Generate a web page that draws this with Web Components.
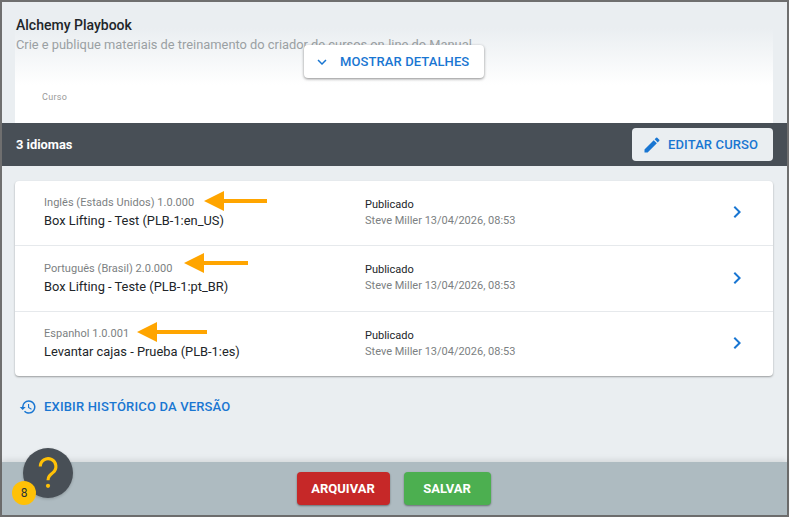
<!DOCTYPE html>
<html lang="pt">
<head>
<meta charset="utf-8">
<style>
  html, body { margin: 0; height: 100%; }
  body { font-family: Roboto, "Liberation Sans", sans-serif; overflow: hidden; }
</style>
</head>
<body>
<course-dialog>
  <course-header title-text="Alchemy Playbook"
    description="Crie e publique materiais de treinamento do criador de cursos on-line do Manual"></course-header>
  <language-bar count="3 idiomas"></language-bar>
  <language-list>
    <language-row lang-label="Inglês (Estads Unidos) 1.0.000" course="Box Lifting - Test (PLB-1:en_US)" arrow="189" arrow-top="10" tail="63"></language-row>
    <language-row lang-label="Português (Brasil) 2.0.000" course="Box Lifting - Teste (PLB-1:pt_BR)" arrow="169" arrow-top="7" tail="64"></language-row>
    <language-row lang-label="Espanhol 1.0.001" course="Levantar cajas - Prueba (PLB-1:es)" arrow="122" arrow-top="10" tail="70"></language-row>
  </language-list>
  <history-link></history-link>
  <dialog-footer></dialog-footer>
</course-dialog>

<script>
// icones partages
const ICONS = {
  chevronDown: `<svg width="18" height="18" viewBox="0 0 24 24" fill="#1976d2"><path d="M7.41 8.59 12 13.17l4.59-4.58L18 10l-6 6-6-6z"/></svg>`,
  chevronRight: `<svg width="24" height="24" viewBox="0 0 24 24" fill="#1976d2"><path d="M10 6 8.59 7.41 13.17 12l-4.58 4.59L10 18l6-6z"/></svg>`,
  pencil: `<svg width="20" height="20" viewBox="0 0 24 24" fill="#1976d2"><path d="M3 17.25V21h3.75L17.81 9.94l-3.75-3.75L3 17.25zM20.71 7.04a1 1 0 0 0 0-1.41l-2.34-2.34a1 1 0 0 0-1.41 0l-1.83 1.83 3.75 3.75 1.83-1.83z"/></svg>`,
  history: `<svg width="18" height="18" viewBox="0 0 24 24" fill="#1976d2"><path d="M13 3a9 9 0 0 0-9 9H1l3.89 3.89.07.14L9 12H6a7 7 0 1 1 2.05 4.95l-1.42 1.42A9 9 0 1 0 13 3zm-1 5v5l4.28 2.54.72-1.21-3.5-2.08V8H12z"/></svg>`,
  help: `<svg width="50" height="50" viewBox="0 0 50 50"><path d="M17.3 18.5a7.8 7.8 0 1 1 12.6 6.1c-3 2.3-4.9 3.8-4.9 7.6" fill="none" stroke="#ffc107" stroke-width="3.1"/><circle cx="25" cy="37.8" r="2.1" fill="#ffc107"/></svg>`
};

class CourseDialog extends HTMLElement {
  connectedCallback() {
    this.attachShadow({ mode: "open" }).innerHTML = `
      <style>
        :host { display: flex; flex-direction: column; box-sizing: border-box; height: 517px; width: 789px;
                background: #eaeef1; border: 2px solid #6f6f6f; }
      </style>
      <slot></slot>`;
  }
}

class CourseHeader extends HTMLElement {
  connectedCallback() {
    this.attachShadow({ mode: "open" }).innerHTML = `
      <style>
        :host { display: block; height: 121px; position: relative; padding: 0 14px; overflow: hidden;
                color: #212529; }
        .sheet { position: absolute; left: 13px; right: 14px; top: 26px; bottom: 0;
                 background: linear-gradient(#eaeef1 0, #ffffff 57px); }
        .text { position: relative; padding-top: 14px; }
        h1 { margin: 0; font: 500 14px/18px Roboto, sans-serif; color: #212529; }
        p { margin: 2px 0 0; font: 400 12.85px/18px Roboto, sans-serif; color: #9aa0a3; white-space: nowrap; }
        .label { position: absolute; left: 40px; top: 89px; font: 400 9px/12px Roboto, sans-serif; color: #999; letter-spacing: .3px; }
        button { position: absolute; left: 302px; top: 43px; width: 180px; height: 33px; border: 0; border-radius: 4px;
                 background: #fff; color: #1976d2; font: 500 13px Roboto, sans-serif; letter-spacing: .1px;
                 display: flex; align-items: center; gap: 9px; padding: 0 0 0 9px; box-sizing: border-box;
                 box-shadow: 0 1px 3px rgba(0,0,0,.45); }
        svg { display: block; }
      </style>
      <div class="sheet"></div>
      <div class="text">
        <h1>${this.getAttribute("title-text")}</h1>
        <p>${this.getAttribute("description")}</p>
      </div>
      <div class="label">Curso</div>
      <button>${ICONS.chevronDown}<span>MOSTRAR DETALHES</span></button>`;
  }
}

class LanguageBar extends HTMLElement {
  connectedCallback() {
    this.attachShadow({ mode: "open" }).innerHTML = `
      <style>
        :host { display: flex; align-items: center; justify-content: space-between; height: 43px; box-sizing: border-box;
                background: #484f56; color: #fff; padding: 0 14px; }
        span.count { font: 700 12.85px Roboto, sans-serif; }
        button { height: 33px; width: 141px; border: 0; border-radius: 4px; background: #eaeef1; color: #1976d2;
                 font: 500 13px Roboto, sans-serif; letter-spacing: .12px; display: flex; align-items: center;
                 gap: 6px; padding: 0 0 0 10px; box-sizing: border-box; }
        svg { display: block; }
      </style>
      <span class="count">${this.getAttribute("count")}</span>
      <button>${ICONS.pencil}<span>EDITAR CURSO</span></button>`;
  }
}

class LanguageList extends HTMLElement {
  connectedCallback() {
    this.attachShadow({ mode: "open" }).innerHTML = `
      <style>
        :host { display: block; margin: 15px 14px 0 13px; background: #fff; border-radius: 4px;
                box-shadow: 0 1px 2px rgba(0,0,0,.35); }
        ::slotted(language-row:not(:last-child)) { border-bottom: 1px solid #e6e9ec; }
        ::slotted(language-row:nth-child(2)) { height: 66px; --left-bottom: 1px; --right-bottom: 1px; }
        ::slotted(language-row:last-child) { height: 64px; }
      </style>
      <slot></slot>`;
  }
}

class LanguageRow extends HTMLElement {
  connectedCallback() {
    const arrow = this.getAttribute("arrow");
    const top = this.getAttribute("arrow-top");
    const tail = this.getAttribute("tail");
    this.attachShadow({ mode: "open" }).innerHTML = `
      <style>
        :host { display: flex; align-items: center; position: relative; height: 65px; box-sizing: border-box; }
        .left { width: 321px; padding: 0 0 var(--left-bottom, 2px) 29px; }
        .right { flex: 1; padding-bottom: var(--right-bottom, 0); }
        .small { font: 400 11px/16px Roboto, sans-serif; color: #7c7f82; letter-spacing: .03px; }
        .big { font: 400 12.85px/18px Roboto, sans-serif; color: #212529; margin-top: 1px; }
        .status { font: 400 11px/16px Roboto, sans-serif; color: #212529; }
        .who { font: 400 11px/16px Roboto, sans-serif; color: #7c7f82; }
        .go { margin: 0 24px 2px 0; }
        .go svg { display: block; }
        .arrow { position: absolute; left: ${arrow}px; top: ${top}px; }
      </style>
      <div class="left">
        <div class="small">${this.getAttribute("lang-label")}</div>
        <div class="big">${this.getAttribute("course")}</div>
      </div>
      <div class="right">
        <div class="status">Publicado</div>
        <div class="who">Steve Miller 13/04/2026, 08:53</div>
      </div>
      <div class="go">${ICONS.chevronRight}</div>
      <svg class="arrow" width="${tail}" height="20" viewBox="0 0 ${tail} 20">
        <path d="M0 10 20 0V8H${tail}V12H20V20z" fill="#ffa500"/>
      </svg>`;
  }
}

class HistoryLink extends HTMLElement {
  connectedCallback() {
    this.attachShadow({ mode: "open" }).innerHTML = `
      <style>
        :host { display: flex; align-items: center; gap: 7px; margin: 22px 0 0 17px; color: #1976d2;
                font: 500 13px/18px Roboto, sans-serif; letter-spacing: .17px; }
        svg { display: block; }
      </style>
      ${ICONS.history}<span>EXIBIR HISTÓRICO DA VERSÃO</span>`;
  }
}

class DialogFooter extends HTMLElement {
  connectedCallback() {
    this.attachShadow({ mode: "open" }).innerHTML = `
      <style>
        :host { display: flex; align-items: center; justify-content: center; gap: 14px; height: 53px; margin-top: auto;
                padding-right: 2px; background: #aebbc1; position: relative; box-shadow: 0 -2px 6px rgba(0,0,0,.1); }
        button { height: 33px; border: 0; border-radius: 4px; color: #fff; font: 700 13px Roboto, sans-serif; padding: 0;
                 box-shadow: 0 1px 2px rgba(0,0,0,.4); }
        .archive { width: 93px; background: #c62828; }
        .save { width: 87px; background: #4caf50; }
        .help { position: absolute; left: 21px; top: -14px; width: 50px; height: 50px; border-radius: 50%;
                background: #484f56; box-shadow: 0 1px 3px rgba(0,0,0,.2); }
        .help svg { display: block; }
        .badge { position: absolute; left: 10px; top: 19px; width: 24px; height: 24px; border-radius: 50%;
                 background: #ffc107; color: #263238; font: 400 12px/24px Roboto, sans-serif; text-align: center; }
      </style>
      <div class="help">${ICONS.help}</div>
      <div class="badge">8</div>
      <button class="archive">ARQUIVAR</button>
      <button class="save">SALVAR</button>`;
  }
}

customElements.define("course-dialog", CourseDialog);
customElements.define("course-header", CourseHeader);
customElements.define("language-bar", LanguageBar);
customElements.define("language-list", LanguageList);
customElements.define("language-row", LanguageRow);
customElements.define("history-link", HistoryLink);
customElements.define("dialog-footer", DialogFooter);
</script>
</body>
</html>
